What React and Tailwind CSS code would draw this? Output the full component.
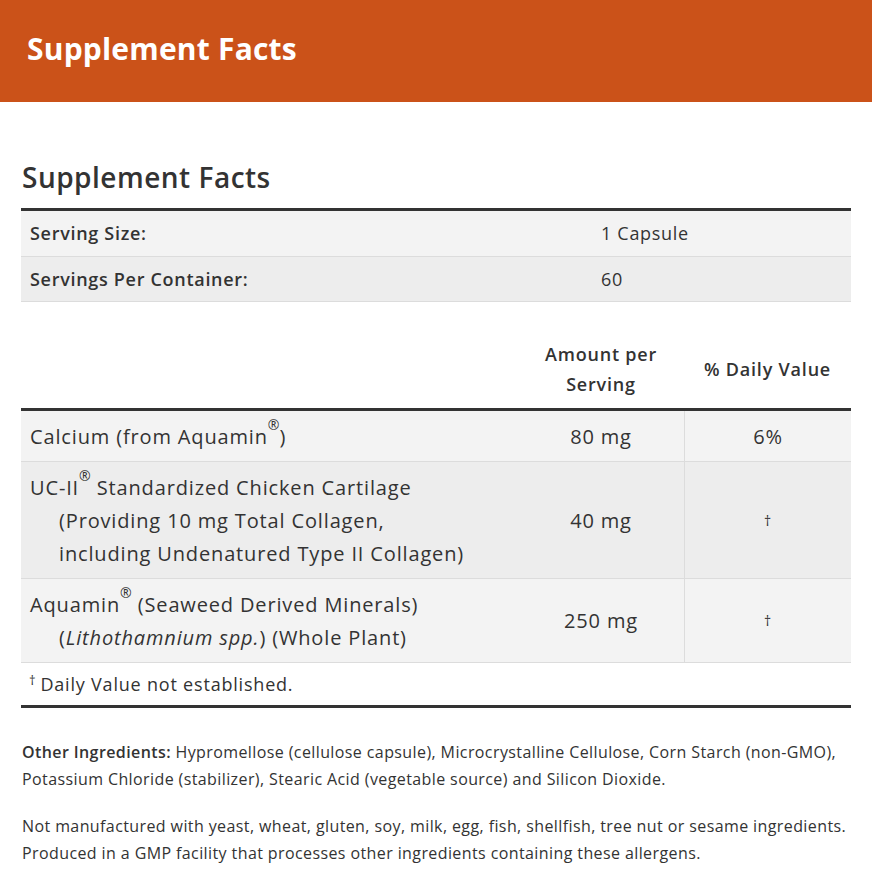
import React from "react";

const font = { fontFamily: "'Open Sans', 'Liberation Sans', sans-serif" };

const Reg = () => <sup className="text-[14px] align-[7px] tracking-normal">®</sup>;

const nutrients = [
  {
    lines: [
      <>
        Calcium (from Aquamin<Reg />)
      </>,
    ],
    amount: "80 mg",
    dv: "6%",
  },
  {
    lines: [
      <>
        UC-II<Reg /> Standardized Chicken Cartilage
      </>,
      "(Providing 10 mg Total Collagen,",
      "including Undenatured Type II Collagen)",
    ],
    amount: "40 mg",
    dv: "†",
  },
  {
    lines: [
      <>
        Aquamin<Reg /> (Seaweed Derived Minerals)
      </>,
      <>
        (<i>Lithothamnium spp.</i>) (Whole Plant)
      </>,
    ],
    amount: "250 mg",
    dv: "†",
  },
];

const App = () => {
  return (
    <div className="bg-white text-[#333] min-h-[875px]" style={font}>
      <div className="bg-[#cb5219] h-[102px] flex items-center px-[27px] pb-[5px]">
        <h1 className="text-white text-[30px] font-bold tracking-[0.2px]">Supplement Facts</h1>
      </div>

      <div className="px-[21px] pt-[56px] pb-6">
        <h2 className="text-[28px] font-semibold leading-[38px] mb-[12px] pl-[1px] tracking-[0.5px]">
          Supplement Facts
        </h2>

        {/* serving info */}
        <div className="border-t-[3px] border-[#333] text-[18px] tracking-[0.7px]">
          <div className="grid grid-cols-[571px_1fr] bg-[#f3f3f3] h-[46px] items-center border-b border-[#dcdcdc]">
            <div className="pl-[9px] font-semibold">Serving Size:</div>
            <div className="pl-[9px]">1 Capsule</div>
          </div>
          <div className="grid grid-cols-[571px_1fr] bg-[#ededed] h-[45px] items-center border-b border-[#dcdcdc]">
            <div className="pl-[9px] font-semibold">Servings Per Container:</div>
            <div className="pl-[9px]">60</div>
          </div>
        </div>

        {/* nutrient table */}
        <div className="mt-[34px]">
          <div className="grid grid-cols-[497px_166px_167px] items-center h-[72px] pb-[6px] text-[18px] font-semibold leading-[30px] tracking-[0.8px]">
            <div />
            <div className="text-center">
              Amount per
              <br />
              Serving
            </div>
            <div className="text-center">% Daily Value</div>
          </div>
          <div className="border-t-[3px] border-[#333]">
            {nutrients.map((n, i) => (
              <div
                key={i}
                className={`grid grid-cols-[497px_166px_167px] border-b border-[#dcdcdc] text-[20px] leading-[33px] tracking-[0.85px] ${
                  i % 2 === 0 ? "bg-[#f3f3f3]" : "bg-[#ededed]"
                }`}
              >
                <div className="pl-[9px] py-[8.5px]">
                  {n.lines.map((line, j) => (
                    <div key={j} className={j > 0 ? "pl-[29px]" : ""}>
                      {line}
                    </div>
                  ))}
                </div>
                <div className="flex items-center justify-center">{n.amount}</div>
                <div className="flex items-center justify-center border-l border-[#dcdcdc]">
                  {n.dv === "†" ? <span className="text-[14px] text-[#333]">†</span> : n.dv}
                </div>
              </div>
            ))}
            <div className="h-[45px] flex items-center pl-[8px] text-[18px] tracking-[0.8px] border-b-[3px] border-[#333]">
              <span className="text-[13px] mr-[4px] relative -top-[3px]">†</span>
              Daily Value not established.
            </div>
          </div>
        </div>

        <div className="mt-[31px] text-[16px] leading-[27px] pl-[1px] tracking-[0.4px]">
          <p>
            <span className="font-semibold">Other Ingredients:</span> Hypromellose (cellulose
            capsule), Microcrystalline Cellulose, Corn Starch (non-GMO),
            <br />
            Potassium Chloride (stabilizer), Stearic Acid (vegetable source) and Silicon Dioxide.
          </p>
          <p className="mt-[20px]">
            Not manufactured with yeast, wheat, gluten, soy, milk, egg, fish, shellfish, tree nut
            or sesame ingredients.
            <br />
            Produced in a GMP facility that processes other ingredients containing these
            allergens.
          </p>
        </div>
      </div>
    </div>
  );
};

export default App;
